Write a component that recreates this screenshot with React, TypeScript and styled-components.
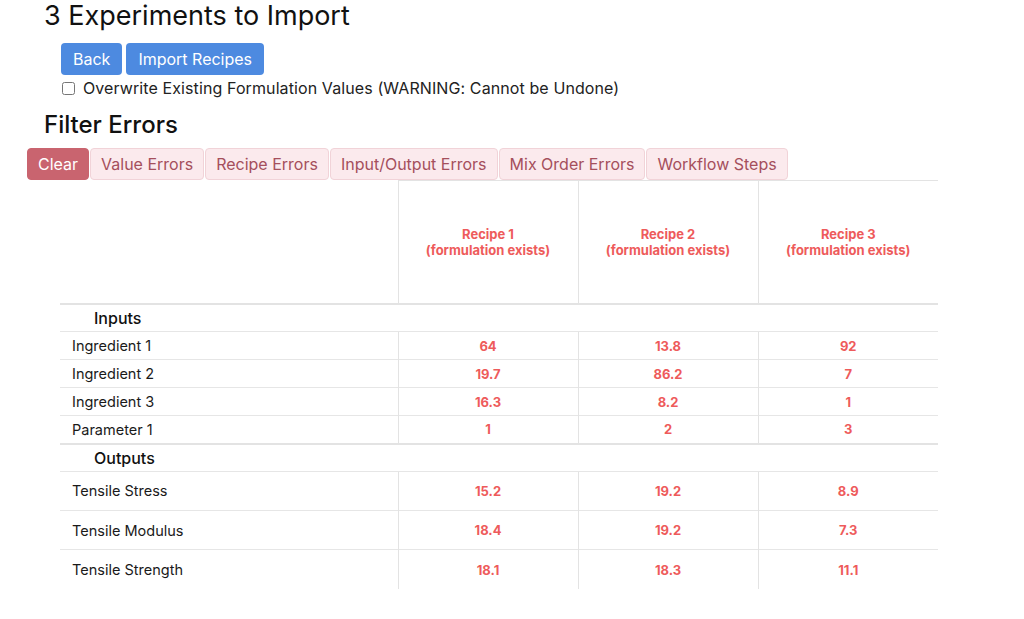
import React from 'react'
import styled, { createGlobalStyle } from 'styled-components'

const GlobalStyle = createGlobalStyle`
  body {
    margin: 0;
    background: #ffffff;
    font-family: Inter, 'Noto Sans', sans-serif;
    color: #111111;
  }
`

const Page = styled.div`
  width: 1024px;
  height: 619px;
  overflow: hidden;
`

const Title = styled.h1`
  margin: 0 0 0 44px;
  font-size: 27px;
  line-height: 32px;
  font-weight: 400;
  color: #111;
`

const ActionBar = styled.div`
  display: flex;
  gap: 4px;
  margin: 11px 0 0 61px;
`

const PrimaryButton = styled.button`
  height: 32px;
  padding: 0 12px;
  border: none;
  border-radius: 4px;
  background: #4d8ae0;
  color: #ffffff;
  font-family: inherit;
  font-size: 16px;
  cursor: pointer;
`

const CheckRow = styled.label`
  display: flex;
  align-items: center;
  gap: 8px;
  margin: 3px 0 0 62px;
  height: 20px;
  font-size: 16px;
  letter-spacing: 0.1px;
  color: #222;
`

const CheckBox = styled.input`
  margin: 0;
  width: 13px;
  height: 13px;
`

const SubTitle = styled.h2`
  margin: 12px 0 0 44px;
  font-size: 24px;
  line-height: 30px;
  font-weight: 500;
  color: #111;
`

const FilterBar = styled.div`
  display: flex;
  gap: 1px;
  margin: 8px 0 0 27px;
`

const FilterTab = styled.button<{ $active?: boolean }>`
  height: 32px;
  padding: 0 10px;
  border-radius: 4px;
  border: 1px solid ${(p) => (p.$active ? '#c9646f' : '#f1d3d8')};
  background: ${(p) => (p.$active ? '#c9646f' : '#fbeaed')};
  color: ${(p) => (p.$active ? '#ffffff' : '#a54f5c')};
  font-family: inherit;
  font-size: 16px;
  cursor: pointer;
`

const Table = styled.table`
  margin-left: 60px;
  width: 878px;
  border-collapse: collapse;
  table-layout: fixed;
`

const HeadCell = styled.th<{ $first?: boolean }>`
  height: 122px;
  padding: 0;
  border-top: ${(p) => (p.$first ? 'none' : '1px solid #e3e3e3')};
  border-right: 1px solid #e3e3e3;
  border-bottom: 2px solid #e3e3e3;
  color: #ee5b5b;
  font-size: 13px;
  line-height: 16px;
  font-weight: 700;
  text-align: center;
  vertical-align: middle;
  &:last-child {
    border-right: none;
  }
`

const SectionCell = styled.td`
  height: 26px;
  padding: 0 0 0 34px;
  font-size: 16px;
  font-weight: 500;
  color: #111;
  border-bottom: 1px solid #e6e6e6;
`

const Row = styled.tr<{ $tall?: boolean; $endOfGroup?: boolean; $last?: boolean }>`
  height: ${(p) => (p.$tall ? '39.4px' : '28px')};
  border-bottom: ${(p) =>
    p.$last ? 'none' : p.$endOfGroup ? '2px solid #e3e3e3' : '1px solid #e6e6e6'};
`

const LabelCell = styled.td`
  padding: 0 0 0 12px;
  font-size: 14.5px;
  color: #1a1a1a;
  border-right: 1px solid #e3e3e3;
`

const ValueCell = styled.td`
  padding: 0;
  text-align: center;
  font-size: 13px;
  font-weight: 700;
  color: #ee5b5b;
  border-right: 1px solid #e3e3e3;
  &:last-child {
    border-right: none;
  }
`

const filters = [
  'Value Errors',
  'Recipe Errors',
  'Input/Output Errors',
  'Mix Order Errors',
  'Workflow Steps',
]

const recipes = ['Recipe 1', 'Recipe 2', 'Recipe 3']

const inputs: [string, string[]][] = [
  ['Ingredient 1', ['64', '13.8', '92']],
  ['Ingredient 2', ['19.7', '86.2', '7']],
  ['Ingredient 3', ['16.3', '8.2', '1']],
  ['Parameter 1', ['1', '2', '3']],
]

const outputs: [string, string[]][] = [
  ['Tensile Stress', ['15.2', '19.2', '8.9']],
  ['Tensile Modulus', ['18.4', '19.2', '7.3']],
  ['Tensile Strength', ['18.1', '18.3', '11.1']],
]

const App = (): JSX.Element => {
  return (
    <Page>
      <GlobalStyle />
      <Title>3 Experiments to Import</Title>
      <ActionBar>
        <PrimaryButton>Back</PrimaryButton>
        <PrimaryButton>Import Recipes</PrimaryButton>
      </ActionBar>
      <CheckRow>
        <CheckBox type="checkbox" />
        Overwrite Existing Formulation Values (WARNING: Cannot be Undone)
      </CheckRow>
      <SubTitle>Filter Errors</SubTitle>
      <FilterBar>
        <FilterTab $active>Clear</FilterTab>
        {filters.map((f) => (
          <FilterTab key={f}>{f}</FilterTab>
        ))}
      </FilterBar>
      <Table>
        <colgroup>
          <col style={{ width: 338 }} />
          <col style={{ width: 180 }} />
          <col style={{ width: 180 }} />
          <col style={{ width: 180 }} />
        </colgroup>
        <thead>
          <tr>
            <HeadCell $first />
            {recipes.map((r) => (
              <HeadCell key={r}>
                {r}
                <br />
                (formulation exists)
              </HeadCell>
            ))}
          </tr>
        </thead>
        <tbody>
          <tr>
            <SectionCell colSpan={4}>Inputs</SectionCell>
          </tr>
          {inputs.map(([name, vals], idx) => (
            <Row key={name} $endOfGroup={idx === inputs.length - 1}>
              <LabelCell>{name}</LabelCell>
              {vals.map((v, i) => (
                <ValueCell key={i}>{v}</ValueCell>
              ))}
            </Row>
          ))}
          <tr>
            <SectionCell colSpan={4}>Outputs</SectionCell>
          </tr>
          {outputs.map(([name, vals], idx) => (
            <Row key={name} $tall $last={idx === outputs.length - 1}>
              <LabelCell>{name}</LabelCell>
              {vals.map((v, i) => (
                <ValueCell key={i}>{v}</ValueCell>
              ))}
            </Row>
          ))}
        </tbody>
      </Table>
    </Page>
  )
}

export default App
